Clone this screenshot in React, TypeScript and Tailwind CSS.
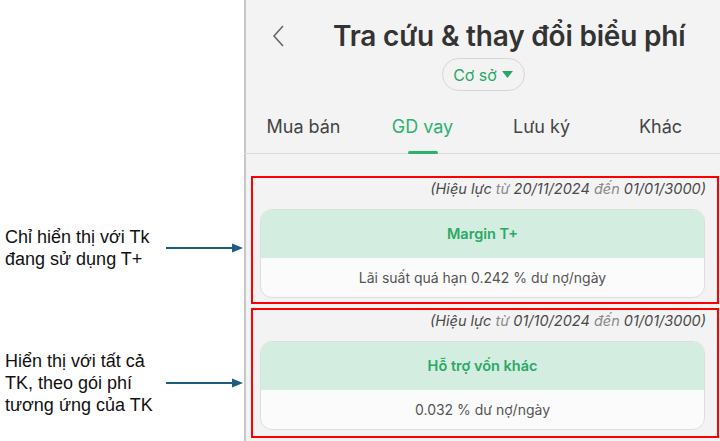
import React from "react";

const Arrow = () => (
  <svg width="78" height="12" viewBox="0 0 78 12" className="shrink-0">
    <line x1="0" y1="6" x2="68" y2="6" stroke="#1d5b80" strokeWidth="2.2" />
    <polygon points="66,1.5 77,6 66,10.5" fill="#1d5b80" />
  </svg>
);

const Card = ({ from, title, body, pb }: { from: string; title: string; body: string; pb: string }) => (
  <div className={`border-2 border-[#ff0000] pl-[7px] pr-[12px] pt-[1px] ${pb}`}>
    <div className="text-right italic text-[14.5px] leading-[20px] text-[#4a4a4a] mr-[-1px]">
      <span>(Hiệu lực </span>
      <span className="text-[#8a8a8a]">từ </span>
      <span>{from} </span>
      <span className="text-[#8a8a8a]">đến </span>
      <span>01/01/3000)</span>
    </div>
    <div className="mt-[10px] rounded-[12px] border border-[#dedede] overflow-hidden bg-[#fbfbfb]">
      <div className="h-[48px] bg-[#d3ede0] flex items-center justify-center text-[14.5px] font-semibold text-[#2aa866]">
        {title}
      </div>
      <div className="h-[39px] flex items-center justify-center text-[14px] text-[#555]">{body}</div>
    </div>
  </div>
);

export default function App() {
  return (
    <div className="w-[720px] h-[441px] overflow-hidden flex bg-white" style={{ fontFamily: "Inter, 'Noto Sans', sans-serif" }}>
      <div className="w-[244px] shrink-0 flex flex-col pt-[226px] text-[18px] leading-[22px] text-[#111]" style={{ fontFamily: "'Liberation Sans', Arial, sans-serif" }}>
        <div className="flex items-center">
          <div className="pl-[5px] w-[167px] whitespace-nowrap">
            <div>Chỉ hiển thị với Tk</div>
            <div>đang sử dụng T+</div>
          </div>
          <Arrow />
        </div>
        <div className="flex items-center mt-[80px]">
          <div className="pl-[5px] w-[167px] whitespace-nowrap">
            <div>Hiển thị với tất cả</div>
            <div>TK, theo gói phí</div>
            <div>tương ứng của TK</div>
          </div>
          <Arrow />
        </div>
      </div>
      <div className="flex-1 bg-[#f3f3f3] border-l-2 border-[#c8c8c8] flex flex-col">
        <div className="flex items-center h-[50px] pt-[22px] pl-[26px]">
          <svg width="14" height="24" viewBox="0 0 14 24">
            <polyline points="11,2 2,12 11,22" fill="none" stroke="#666" strokeWidth="1.6" />
          </svg>
          <div className="ml-[47px] text-[28px] font-semibold text-[#333] tracking-[-0.2px] whitespace-nowrap">
            Tra cứu &amp; thay đổi biểu phí
          </div>
        </div>
        <div className="flex justify-center mt-[8px]">
          <div className="h-[33px] w-[83px] rounded-full border border-[#d6d6d6] flex items-center justify-center gap-[5px] text-[16px] text-[#2aa866]">
            <span>Cơ sở</span>
            <svg width="11" height="7" viewBox="0 0 11 7">
              <polygon points="0,0 11,0 5.5,7" fill="#2aa866" />
            </svg>
          </div>
        </div>
        <div className="grid grid-cols-4 mt-[22px] ml-[-2px] border-b border-[#dadada] h-[41px] text-[18px]">
          <div className="flex justify-center text-[#444]">Mua bán</div>
          <div className="flex flex-col items-center text-[#2bb26e]">
            <span>GD vay</span>
            <div className="mt-auto w-[30px] h-[3px] rounded-full bg-[#2bb26e] mb-[-1px]"></div>
          </div>
          <div className="flex justify-center text-[#444]">Lưu ký</div>
          <div className="flex justify-center text-[#444]">Khác</div>
        </div>
        <div className="pl-[5px] pr-[1px] mt-[22px] flex flex-col gap-[4px]">
          <Card from="20/11/2024" title="Margin T+" body="Lãi suất quá hạn 0.242 % dư nợ/ngày" pb="pb-[4px]" />
          <Card from="01/10/2024" title="Hỗ trợ vốn khác" body="0.032 % dư nợ/ngày" pb="pb-[6px]" />
        </div>
      </div>
    </div>
  );
}
